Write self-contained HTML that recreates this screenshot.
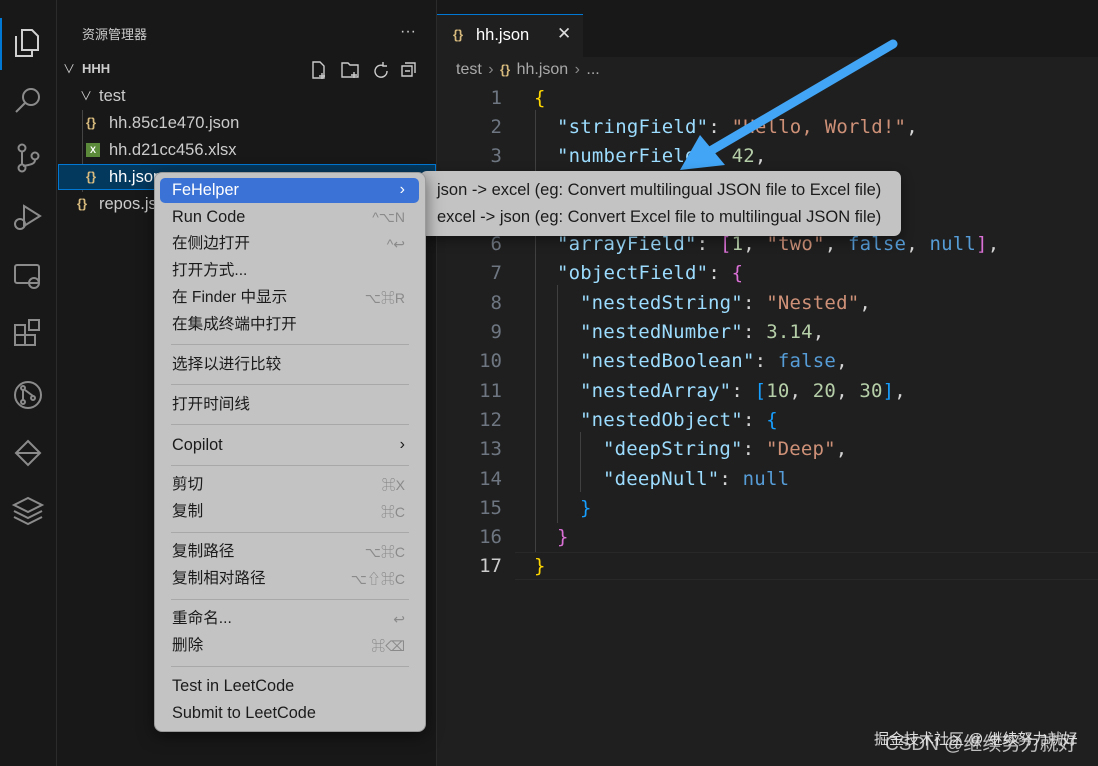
<!DOCTYPE html>
<html><head><meta charset="utf-8"><style>
*{margin:0;padding:0;box-sizing:border-box}
body{width:1098px;height:766px;background:#1f1f1f;overflow:hidden;position:relative;font-family:"Liberation Sans","Noto Sans CJK SC",sans-serif;color:#ccc}
.abs{position:absolute}
#act{left:0;top:0;width:57px;height:766px;background:#181818;border-right:1px solid #2b2b2b}
#side{left:57px;top:0;width:380px;height:766px;background:#181818;border-right:1px solid #2b2b2b}
#top{left:0;top:0;width:1098px;height:14px;background:#181818}
.t{position:absolute;white-space:nowrap;font-size:16.5px;color:#ccc;line-height:20px}
.br{color:#d7ba7d;font-weight:bold;font-size:13px}
.code{position:absolute;font-family:"DejaVu Sans Mono",monospace;font-size:19px;letter-spacing:0.2px;white-space:pre;line-height:24px;color:#d4d4d4}
.k{color:#9cdcfe}.s{color:#ce9178}.n{color:#b5cea8}.b{color:#569cd6}.y{color:#ffd700}.p{color:#da70d6}.bl{color:#179fff}
.ln{position:absolute;width:60px;text-align:right;font-family:"DejaVu Sans Mono",monospace;font-size:19px;color:#6e7681;left:442px;line-height:24px}
#menu{left:154px;top:172px;width:272px;height:560px;background:#c3c3c3;border-radius:8px;box-shadow:0 4px 16px rgba(0,0,0,.5);border:1px solid #9a9a9a}
.mi{position:absolute;left:17px;font-size:16.3px;color:#1b1b1b;line-height:20px;white-space:nowrap}
.cj{font-size:15.6px}
.sc{position:absolute;right:20px;font-size:14px;color:#8a8a8a;line-height:20px}
.sep{position:absolute;left:16px;right:16px;height:1px;background:#a8a8a8}
#sub{left:420px;top:171px;width:481px;height:65px;background:#c3c3c3;border-radius:7px;box-shadow:0 4px 12px rgba(0,0,0,.4)}
</style></head><body>
<div id="top" class="abs"></div>
<div id="act" class="abs">
<div class="abs" style="left:0;top:18px;width:2px;height:52px;background:#0078d4"></div>
<svg class="abs" style="left:0;top:0" width="57" height="540" fill="none" stroke="#8b8b8b" stroke-width="2">
<g stroke="#d0d0d0"><path d="M22 30h10l6 6v14H22z"/><path d="M16 36v20h16v-6"/></g>
<circle cx="31" cy="97" r="8"/><path d="M25 103l-9 9"/>
<circle cx="22" cy="148" r="3.5"/><circle cx="22" cy="168" r="3.5"/><circle cx="35" cy="156" r="3.5"/><path d="M22 152v12M35 160c0 5-8 5-12 6"/>
<path d="M24 206l16 10-16 10z"/><circle cx="20" cy="224" r="5"/>
<rect x="15" y="265" width="24" height="18" rx="2"/><circle cx="34" cy="283" r="5"/>
<path d="M15 325h10v10H15zM15 335h10v10H15zM25 335h10v10H25zM29 320h10v10H29z"/>
<circle cx="28" cy="395" r="13"/><circle cx="23" cy="388" r="2"/><circle cx="23" cy="402" r="2"/><circle cx="33" cy="398" r="2"/><path d="M23 390v10M33 396l-8-6"/>
<path d="M28 441l12 12-12 12-12-12zM16 453h24"/>
<path d="M14 505l14-7 14 7-14 7zM14 511l14 7 14-7M14 517l14 7 14-7"/>
</svg>
</div>
<div id="side" class="abs"></div>
<div class="t" style="left:82px;top:25px;font-size:13px">资源管理器</div>
<div class="t" style="left:400px;top:22px;font-size:16px">···</div>
<div class="t" style="left:63px;top:59px;font-size:12px">∨</div>
<div class="t" style="left:82px;top:59px;font-size:13px;font-weight:bold">HHH</div>
<svg class="abs" style="left:310px;top:60px" width="110" height="20" fill="none" stroke="#ccc" stroke-width="1.4"><path d="M3 2h7l4 4v12H3zM12 13v6M9 16h6"/><path d="M32 3h6l2 2h8v12H32zM44 12v6M41 15h6"/><path d="M74 6a6 6 0 1 0 3 5M73 2v4h4"/><path d="M92 6h10v10H92zM95 3h10v10M95 11h5"/></svg>
<div class="t" style="left:80px;top:86px;font-size:12px">∨</div>
<div class="t" style="left:99px;top:86px">test</div>
<div class="abs" style="left:82px;top:110px;width:1px;height:82px;background:#444"></div>
<div class="t br" style="left:86px;top:113px">{}</div><div class="t" style="left:109px;top:113px">hh.85c1e470.json</div>
<div class="abs" style="left:86px;top:143px;width:14px;height:14px;background:#5a8a3a;font-size:9px;color:#fff;font-weight:bold;text-align:center;line-height:14px">X</div><div class="t" style="left:109px;top:140px">hh.d21cc456.xlsx</div>
<div class="abs" style="left:58px;top:164px;width:378px;height:26px;background:#04395e;border:1px solid #0078d4"></div>
<div class="t br" style="left:86px;top:167px">{}</div><div class="t" style="left:109px;top:167px;color:#fff">hh.json</div>
<div class="t br" style="left:77px;top:194px">{}</div><div class="t" style="left:99px;top:194px">repos.json</div>
<!-- editor -->
<div class="abs" style="left:437px;top:14px;width:661px;height:43px;background:#181818"></div>
<div class="abs" style="left:437px;top:14px;width:146px;height:43px;background:#1f1f1f;border-top:1px solid #0078d4"></div>
<div class="t br" style="left:453px;top:25px">{}</div><div class="t" style="left:476px;top:25px;color:#fff">hh.json</div>
<div class="t" style="left:557px;top:24px;font-size:17px;color:#ddd">✕</div>
<div class="t" style="left:456px;top:60px;color:#a9a9a9;font-size:16px;word-spacing:2px">test <span style="color:#888">›</span> <span class="br">{}</span> hh.json <span style="color:#888">›</span> ...</div>
<div class="abs" style="left:535px;top:110px;width:1px;height:442px;background:#404040"></div>
<div class="abs" style="left:557px;top:285px;width:1px;height:238px;background:#404040"></div>
<div class="abs" style="left:580px;top:432px;width:1px;height:60px;background:#404040"></div>
<div class="abs" style="left:515px;top:552px;width:583px;height:28px;border-top:1px solid #282828;border-bottom:1px solid #282828"></div>
<div class="ln" style="top:86px">1</div><div class="code" style="left:534px;top:86px"><span class="y">{</span></div>
<div class="ln" style="top:115px">2</div><div class="code" style="left:557px;top:115px"><span class="k">"stringField"</span>: <span class="s">"Hello, World!"</span>,</div>
<div class="ln" style="top:144px">3</div><div class="code" style="left:557px;top:144px"><span class="k">"numberField"</span>: <span class="n">42</span>,</div>
<div class="ln" style="top:232px">6</div><div class="code" style="left:557px;top:232px"><span class="k">"arrayField"</span>: <span class="p">[</span><span class="n">1</span>, <span class="s">"two"</span>, <span class="b">false</span>, <span class="b">null</span><span class="p">]</span>,</div>
<div class="ln" style="top:261px">7</div><div class="code" style="left:557px;top:261px"><span class="k">"objectField"</span>: <span class="p">{</span></div>
<div class="ln" style="top:291px">8</div><div class="code" style="left:580px;top:291px"><span class="k">"nestedString"</span>: <span class="s">"Nested"</span>,</div>
<div class="ln" style="top:320px">9</div><div class="code" style="left:580px;top:320px"><span class="k">"nestedNumber"</span>: <span class="n">3.14</span>,</div>
<div class="ln" style="top:349px">10</div><div class="code" style="left:580px;top:349px"><span class="k">"nestedBoolean"</span>: <span class="b">false</span>,</div>
<div class="ln" style="top:379px">11</div><div class="code" style="left:580px;top:379px"><span class="k">"nestedArray"</span>: <span class="bl">[</span><span class="n">10</span>, <span class="n">20</span>, <span class="n">30</span><span class="bl">]</span>,</div>
<div class="ln" style="top:408px">12</div><div class="code" style="left:580px;top:408px"><span class="k">"nestedObject"</span>: <span class="bl">{</span></div>
<div class="ln" style="top:437px">13</div><div class="code" style="left:603px;top:437px"><span class="k">"deepString"</span>: <span class="s">"Deep"</span>,</div>
<div class="ln" style="top:467px">14</div><div class="code" style="left:603px;top:467px"><span class="k">"deepNull"</span>: <span class="b">null</span></div>
<div class="ln" style="top:496px">15</div><div class="code" style="left:580px;top:496px"><span class="bl">}</span></div>
<div class="ln" style="top:525px">16</div><div class="code" style="left:557px;top:525px"><span class="p">}</span></div>
<div class="ln" style="top:554px;color:#ccc">17</div><div class="code" style="left:534px;top:554px"><span class="y">}</span></div>
<!-- arrow -->
<svg class="abs" style="left:0;top:0" width="1098" height="766"><path d="M893 44L700 157" stroke="#42a5f5" stroke-width="9" stroke-linecap="round"/><polygon points="680,170 700,135 725,165" fill="#42a5f5"/></svg>
<!-- submenu -->
<div id="sub" class="abs">
<div class="mi" style="left:17px;top:9px;font-size:16.5px">json -&gt; excel (eg: Convert multilingual JSON file to Excel file)</div>
<div class="mi" style="left:17px;top:36px;font-size:16.5px">excel -&gt; json (eg: Convert Excel file to multilingual JSON file)</div>
</div>
<!-- menu -->
<div id="menu" class="abs">
<div class="abs" style="left:5px;top:5px;width:259px;height:25px;background:#3a72d6;border-radius:5px"></div>
<div class="mi" style="top:7px;color:#fff">FeHelper</div><div class="sc" style="top:7px;color:#fff;font-size:16px">›</div>
<div class="mi" style="top:34px">Run Code</div><div class="sc" style="top:34px">^⌥N</div>
<div class="mi cj" style="top:61px">在侧边打开</div><div class="sc" style="top:61px">^↩</div>
<div class="mi cj" style="top:88px">打开方式...</div>
<div class="mi cj" style="top:115px">在 Finder 中显示</div><div class="sc" style="top:115px">⌥⌘R</div>
<div class="mi cj" style="top:142px">在集成终端中打开</div>
<div class="sep" style="top:171px"></div>
<div class="mi cj" style="top:182px">选择以进行比较</div>
<div class="sep" style="top:211px"></div>
<div class="mi cj" style="top:222px">打开时间线</div>
<div class="sep" style="top:251px"></div>
<div class="mi" style="top:262px">Copilot</div><div class="sc" style="top:262px;color:#1b1b1b;font-size:16px">›</div>
<div class="sep" style="top:292px"></div>
<div class="mi cj" style="top:302px">剪切</div><div class="sc" style="top:302px">⌘X</div>
<div class="mi cj" style="top:329px">复制</div><div class="sc" style="top:329px">⌘C</div>
<div class="sep" style="top:359px"></div>
<div class="mi cj" style="top:369px">复制路径</div><div class="sc" style="top:369px">⌥⌘C</div>
<div class="mi cj" style="top:396px">复制相对路径</div><div class="sc" style="top:396px">⌥⇧⌘C</div>
<div class="sep" style="top:426px"></div>
<div class="mi cj" style="top:436px">重命名...</div><div class="sc" style="top:436px">↩</div>
<div class="mi cj" style="top:463px">删除</div><div class="sc" style="top:463px">⌘⌫</div>
<div class="sep" style="top:493px"></div>
<div class="mi" style="top:503px">Test in LeetCode</div>
<div class="mi" style="top:530px">Submit to LeetCode</div>
</div>
<div class="t" style="left:874px;top:730px;font-size:15px;color:#ddd">掘金技术社区 @ 继续努力就好</div>
<div class="t" style="left:885px;top:735px;font-size:19px;color:rgba(230,230,230,.8)">CSDN @继续努力就好</div>
</body></html>
